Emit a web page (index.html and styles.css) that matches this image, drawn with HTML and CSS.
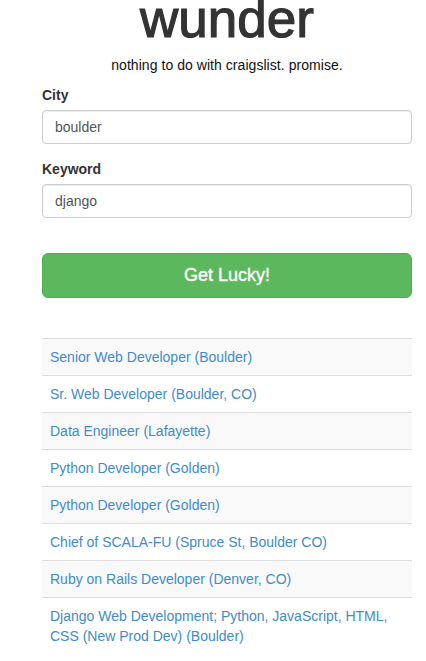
FILE: index.html
```html
<!DOCTYPE html>
<html>
<head>
<meta charset="utf-8">
<link rel="stylesheet" href="styles.css">
</head>
<body>
<div class="container">
  <h1 class="title">wunder</h1>
  <p class="tagline">nothing to do with craigslist. promise.</p>
  <form class="search">
    <div class="form-group">
      <label class="field-label">City</label>
      <div class="field">boulder</div>
    </div>
    <div class="form-group">
      <label class="field-label">Keyword</label>
      <div class="field">django</div>
    </div>
    <div class="btn-success">Get Lucky!</div>
  </form>
  <div class="results">
    <div class="row striped"><a class="job">Senior Web Developer (Boulder)</a></div>
    <div class="row"><a class="job">Sr. Web Developer (Boulder, CO)</a></div>
    <div class="row striped"><a class="job">Data Engineer (Lafayette)</a></div>
    <div class="row"><a class="job">Python Developer (Golden)</a></div>
    <div class="row striped"><a class="job">Python Developer (Golden)</a></div>
    <div class="row"><a class="job">Chief of SCALA-FU (Spruce St, Boulder CO)</a></div>
    <div class="row striped"><a class="job">Ruby on Rails Developer (Denver, CO)</a></div>
    <div class="row"><a class="job">Django Web Development; Python, JavaScript, HTML, CSS (New Prod Dev) (Boulder)</a></div>
  </div>
</div>
</body>
</html>
```

FILE: styles.css
```css
* { box-sizing: border-box; }
html, body { margin: 0; padding: 0; background: #fff; overflow: hidden; }
body {
  font-family: "Liberation Sans", Arial, Helvetica, sans-serif;
  font-size: 14px;
  line-height: 20px;
  color: #333;
}
.container {
  width: 370px;
  margin-left: 42px;
}
.title {
  margin: -8px 0 0 0;
  font-size: 53px;
  line-height: 53px;
  font-weight: 400;
  text-align: center;
  color: #333;
  -webkit-text-stroke: 1.2px #333;
}
.tagline {
  margin: 10px 0 0 0;
  text-align: center;
  color: #111;
  letter-spacing: 0.05px;
}
.search {
  margin-top: 10px;
  display: flex;
  flex-direction: column;
}
.form-group {
  display: flex;
  flex-direction: column;
  margin-bottom: 15px;
}
.field-label {
  font-weight: 700;
  margin-bottom: 5px;
}
.field {
  height: 34px;
  padding: 6px 12px;
  border: 1px solid #ccc;
  border-radius: 4px;
  color: #555;
  box-shadow: inset 0 1px 1px rgba(0,0,0,0.075);
}
.btn-success {
  margin-top: 20px;
  height: 45px;
  border: 1px solid #4cae4c;
  border-radius: 6px;
  background: #5cb85c;
  color: #fff;
  font-size: 18px;
  line-height: 43px;
  text-align: center;
  -webkit-text-stroke: 0.4px #fff;
}
.results {
  margin-top: 40px;
}
.row {
  border-top: 1px solid #ddd;
  padding: 8px;
}
.row.striped { background: #f9f9f9; }
.job {
  color: #428bca;
  text-decoration: none;
}
```
